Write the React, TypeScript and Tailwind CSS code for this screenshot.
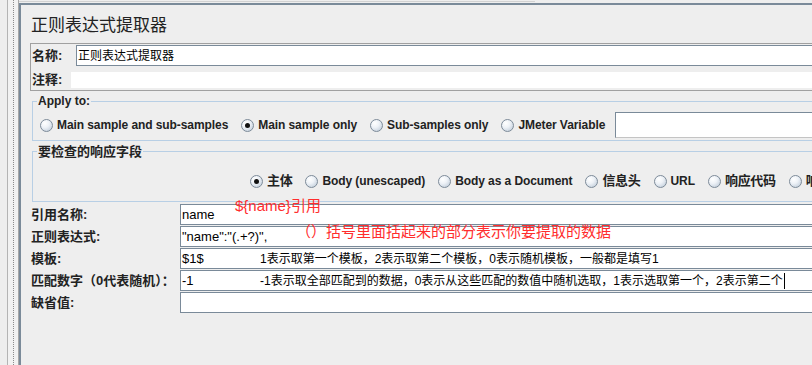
import React from "react";

const Radio = ({ checked }: { checked?: boolean }) => (
  <span className="inline-flex h-[13px] w-[13px] shrink-0 items-center justify-center rounded-full border border-[#7d8b99] bg-[radial-gradient(circle_at_35%_30%,#ffffff_0%,#eef2f7_40%,#b7c5d4_100%)]">
    {checked && <span className="h-[5px] w-[5px] rounded-full bg-[#111111]" />}
  </span>
);

const RadioItem = ({ label, checked, cjk }: { label: string; checked?: boolean; cjk?: boolean }) => (
  <span className="flex shrink-0 items-center">
    <Radio checked={checked} />
    <span
      className={`ml-[4px] whitespace-nowrap font-bold text-[#222222] ${
        cjk ? "text-[13px] tracking-[-0.3px]" : "text-[12px] tracking-[-0.08px]"
      }`}
    >
      {label}
    </span>
  </span>
);

const FormRow = ({ label, children }: { label: string; children?: React.ReactNode }) => (
  <div className="flex h-[21px] items-center">
    <div className="w-[149px] shrink-0 whitespace-nowrap text-[13px] font-bold text-[#222222]">{label}</div>
    <div className="flex h-[21px] flex-1 items-center border border-[#7a8a99] bg-white pl-[1px] text-[13px] text-black">
      {children}
    </div>
  </div>
);

export default function App() {
  return (
    <div className="relative flex h-[365px] w-[812px] overflow-hidden bg-[#eeeeee] font-['Liberation_Sans','Noto_Sans_CJK_SC',sans-serif]">
      {/* left strip */}
      <div className="flex h-full w-[19px] shrink-0">
        <div className="w-[7px]" />
        <div className="w-px bg-[#b4b4b4]" />
        <div className="flex w-[10px] justify-center bg-[#f2f2f2]">
          <div className="h-full border-l border-dotted border-[#8c8c8c]" />
        </div>
        <div className="w-px bg-[#a8a8a8]" />
      </div>

      {/* main panel */}
      <div className="flex w-[830px] shrink-0 flex-col">
        <div className="flex h-[3px] items-start">
          <div className="mt-px h-px w-[516px] bg-[#d2d2d2]" />
        </div>
        <div className="flex flex-1 flex-col border-l-2 border-t-2 border-[#7a8a99]">
          <div className="ml-[10px] mt-[9px] h-[24px] text-[17px] leading-[24px] text-[#222222]">正则表达式提取器</div>

          {/* name / comment box */}
          <div className="ml-[9px] mt-[5px] flex flex-col border border-[#a0a0a0] pb-[2px] pl-px pt-px">
            <div className="flex h-[21px] items-center">
              <div className="w-[44px] shrink-0 text-[13px] font-bold text-[#222222]">名称:</div>
              <div className="flex h-[21px] flex-1 items-center border border-[#7a8a99] bg-white pl-[1px] text-[12px] text-black">正则表达式提取器</div>
            </div>
            <div className="mt-[6px] flex h-[16px] items-center">
              <div className="w-[39px] shrink-0 text-[13px] font-bold text-[#222222]">注释:</div>
              <div className="h-[16px] flex-1 bg-white" />
            </div>
          </div>

          {/* Apply to */}
          <fieldset className="ml-[11px] mt-[3px] border border-[#b8cfe5] pb-[2px]">
            <legend className="ml-[4px] px-[1px] text-[12px] font-bold leading-[14px] text-[#222222]">Apply to:</legend>
            <div className="mt-[4px] flex h-[26px] items-center gap-[13px] pl-[7px]">
              <RadioItem label="Main sample and sub-samples" />
              <RadioItem label="Main sample only" checked />
              <RadioItem label="Sub-samples only" />
              <RadioItem label="JMeter Variable" />
              <div className="-ml-[3px] h-[26px] flex-1 border border-[#7a8a99] border-b-[#c4c4c4] bg-white" />
            </div>
          </fieldset>

          {/* response field */}
          <fieldset className="ml-[11px] mt-[2px] border border-[#b8cfe5] pb-[10px]">
            <legend className="ml-[4px] px-[1px] text-[13px] font-bold leading-[17px] text-[#222222]">要检查的响应字段</legend>
            <div className="mt-[11px] flex h-[20px] items-center gap-[13px] pl-[217px]">
              <RadioItem label="主体" checked cjk />
              <RadioItem label="Body (unescaped)" />
              <RadioItem label="Body as a Document" />
              <RadioItem label="信息头" cjk />
              <RadioItem label="URL" />
              <RadioItem label="响应代码" cjk />
              <RadioItem label="响应信息" cjk />
            </div>
          </fieldset>

          {/* form rows */}
          <div className="ml-[10px] mt-[2px] flex flex-col gap-px">
            <FormRow label="引用名称:">name</FormRow>
            <FormRow label="正则表达式:">"name":"(.+?)",</FormRow>
            <FormRow label="模板:">
              <span className="w-[78px] shrink-0">$1$</span>
              <span className="whitespace-nowrap text-[12px]">1表示取第一个模板，2表示取第二个模板，0表示随机模板，一般都是填写1</span>
            </FormRow>
            <FormRow label="匹配数字（0代表随机）：">
              <span className="w-[78px] shrink-0">-1</span>
              <span className="whitespace-nowrap text-[12px]">-1表示取全部匹配到的数据，0表示从这些匹配的数值中随机选取，1表示选取第一个，2表示第二个</span>
              <span className="ml-px h-[16px] w-px bg-black" />
            </FormRow>
            <FormRow label="缺省值:" />
          </div>
        </div>
      </div>

      {/* red annotations */}
      <div className="absolute left-[235px] top-[196px] whitespace-nowrap text-[15px] leading-[20px] text-[#ff2d2d]">{"${name}引用"}</div>
      <div className="absolute left-[296px] top-[222px] whitespace-nowrap text-[15px] leading-[20px] text-[#ff2d2d]">（）括号里面括起来的部分表示你要提取的数据</div>
    </div>
  );
}
